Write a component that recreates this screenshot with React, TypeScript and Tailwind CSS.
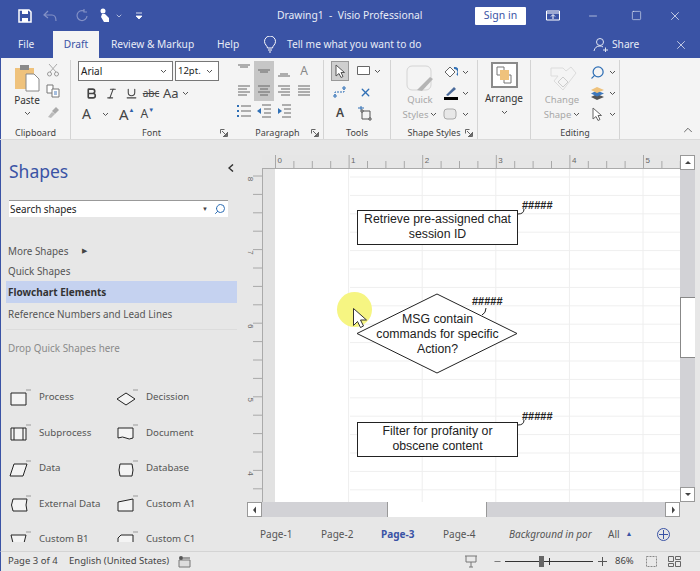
import type { ReactNode } from 'react';
import { Bold, ChevronDown, ChevronUp, Italic, Minus, Search, Square, Underline, X } from 'lucide-react';

const BLUE = '#3a53a5';

function Chev({ className = '' }: { className?: string }) {
  return (
    <svg width="7" height="5" viewBox="0 0 7 5" className={className}>
      <path d="M1 1l2.5 2.5L6 1" fill="none" stroke="#555" strokeWidth="1" />
    </svg>
  );
}

function Launcher() {
  return (
    <svg width="8" height="8" viewBox="0 0 8 8" className="shrink-0">
      <path d="M.5.5h4M.5.5v4M7.5 3v4.500h-4.500M2 2l4.500 4.500M6.500 4v2.500H4" fill="none" stroke="#666" strokeWidth="1" />
    </svg>
  );
}

function Group({
  width,
  label,
  launcher,
  divider = true,
  children,
}: {
  width: number;
  label?: string;
  launcher?: boolean;
  divider?: boolean;
  children: ReactNode;
}) {
  return (
    <div
      className={`flex shrink-0 flex-col ${divider ? 'border-r border-[#d4d4d4]' : ''}`}
      style={{ width }}
    >
      <div className="h-[66px] overflow-hidden">{children}</div>
      <div className="relative flex h-[13px] items-center justify-center text-[9px] leading-none text-[#444]">
        <span className="text-center">{label}</span>
        {launcher && <span className="absolute right-[4px] top-[3px]"><Launcher /></span>}
      </div>
    </div>
  );
}

function Lines({ d }: { d: string }) {
  return (
    <svg width="20" height="20" viewBox="0 0 20 20">
      <path d={d} stroke="#666" strokeWidth="1" fill="none" />
    </svg>
  );
}

function ParaCell({ children, on = false }: { children: ReactNode; on?: boolean }) {
  return (
    <div className={`flex h-[20px] w-[20px] items-center justify-center ${on ? 'bg-[#c6c6c6]' : ''}`}>
      {children}
    </div>
  );
}

function Ribbon() {
  return (
    <div className="flex h-[81px] shrink-0 border-l border-[#3a53a5] bg-[#f4f4f4] pt-[2px]">
      <Group width={70} label="Clipboard">
        <div className="flex">
          <div className="ml-[10px] flex w-[32px] flex-col items-center pt-[3px]">
            <svg width="26" height="29" viewBox="0 0 26 29">
              <path d="M1 5h19v21H1z" fill="#efc27c" />
              <path d="M6 2h9v5H6z" fill="#8a8a8a" />
              <path d="M12 11h8l5 5v12H12z" fill="#fff" stroke="#888" />
            </svg>
            <span className="mt-[1px] text-[10px] leading-[14px] text-[#333]">Paste</span>
            <Chev className="mt-[4px]" />
          </div>
          <div className="ml-[3px] flex flex-col items-center gap-[7px] pt-[3px]">
            <svg width="14" height="14" viewBox="0 0 14 14">
              <path d="M3 1l7 8M11 1L4 9" stroke="#aaa" fill="none" />
              <circle cx="3.500" cy="11" r="2" fill="none" stroke="#999" />
              <circle cx="10.500" cy="11" r="2" fill="none" stroke="#999" />
            </svg>
            <svg width="14" height="14" viewBox="0 0 14 14">
              <path d="M1 1h6v8H1z" fill="#fff" stroke="#777" />
              <path d="M6 5h7v8H6z" fill="#fff" stroke="#777" />
              <path d="M8 8h3M8 10h3" stroke="#4d7fc0" />
            </svg>
            <svg width="14" height="14" viewBox="0 0 14 14">
              <path d="M2 12l4-5 3 2-4 4z" fill="#bbb" />
              <path d="M6 6l4-4 3 3-4 4z" fill="#aaa" />
            </svg>
          </div>
        </div>
      </Group>

      <Group width={161} label="Font" launcher divider={false}>
        <div className="ml-[7px] flex gap-[2px] pt-[1px]">
          <div className="flex h-[20px] w-[95px] items-center justify-between border border-[#777] bg-white pl-[2px] pr-[5px] text-[10px] text-[#222]">
            Arial <Chev />
          </div>
          <div className="flex h-[20px] w-[44px] items-center justify-between border border-[#777] bg-white pl-[2px] pr-[5px] text-[9.500px] text-[#222]">
            12pt. <Chev />
          </div>
        </div>
        <div className="ml-[10px] mt-[2px] flex h-[20px] items-center text-[#444]">
          <span className="flex w-[20px] justify-center"><Bold size={13} strokeWidth={3} /></span>
          <span className="flex w-[20px] justify-center"><Italic size={13} strokeWidth={2} /></span>
          <span className="flex w-[20px] justify-center"><Underline size={13} strokeWidth={2} /></span>
          <span className="w-[20px] text-center text-[10px] leading-none line-through">abc</span>
          <span className="ml-[2px] text-[13px] leading-none">Aa</span>
          <Chev className="ml-[3px]" />
        </div>
        <div className="ml-[11px] mt-[1px] flex h-[20px] items-center text-[#444]">
          <span className="w-[14px] text-[14px] leading-none">A</span>
          <Chev className="ml-[6px]" />
          <span className="ml-[10px] text-[15px] leading-none">A</span>
          <span className="mb-[8px] text-[6px] leading-none text-[#2f5fa8]">▲</span>
          <span className="ml-[6px] text-[12px] leading-none">A</span>
          <span className="mb-[8px] text-[6px] leading-none text-[#2f5fa8]">▼</span>
        </div>
      </Group>

      <Group width={92} label="Paragraph" launcher>
        <div className="ml-[2px] flex w-[80px] flex-wrap pt-[1px]">
          <ParaCell><Lines d="M4 4h12M6 6h8" /></ParaCell>
          <ParaCell on><Lines d="M4 9h12M6 11h8" /></ParaCell>
          <ParaCell><Lines d="M4 15h12M6 13h8" /></ParaCell>
          <ParaCell><span className="text-[12px] leading-none text-[#888]">A</span></ParaCell>
          <ParaCell><Lines d="M4 5h12M4 8h9M4 11h12M4 14h9" /></ParaCell>
          <ParaCell on><Lines d="M4 5h12M6 8h8M4 11h12M6 14h8" /></ParaCell>
          <ParaCell><Lines d="M4 5h12M7 8h9M4 11h12M7 14h9" /></ParaCell>
          <ParaCell><Lines d="M4 5h12M4 8h12M4 11h12M4 14h12" /></ParaCell>
          <ParaCell>
            <svg width="16" height="14" viewBox="0 0 16 14">
              <path d="M5 2h10M5 7h10M5 12h10" stroke="#666" />
              <path d="M1 1h2v2H1zM1 6h2v2H1zM1 11h2v2H1z" fill="#2f6fb5" />
            </svg>
          </ParaCell>
          <ParaCell>
            <svg width="16" height="14" viewBox="0 0 16 14">
              <path d="M6 1h9M8 5h7M8 9h7M6 13h9" stroke="#666" />
              <path d="M1 7l4-3v6z" fill="#2f6fb5" />
            </svg>
          </ParaCell>
          <ParaCell>
            <svg width="16" height="14" viewBox="0 0 16 14">
              <path d="M6 1h9M8 5h7M8 9h7M6 13h9" stroke="#666" />
              <path d="M6 7L2 4v6z" fill="#2f6fb5" />
            </svg>
          </ParaCell>
        </div>
      </Group>

      <Group width={67} label="Tools">
        <div className="grid grid-cols-[20px_36px] items-center gap-y-[1px] pl-[7px] pt-[1px]">
          <div className="flex h-[20px] w-[18px] items-center justify-center border border-[#999] bg-[#cfcfcf]">
            <svg width="10" height="14" viewBox="0 0 10 14"><path d="M1 1v11l3-2.500 2 4 2-1-2-4h3.500z" fill="#fff" stroke="#555" /></svg>
          </div>
          <div className="flex items-center gap-[3px] pl-[6px]">
            <svg width="14" height="10" viewBox="0 0 14 10"><path d="M.5.5h12v8H.5z" fill="#fff" stroke="#666" /></svg>
            <Chev />
          </div>
          <div className="flex h-[20px] w-[18px] items-center justify-center">
            <svg width="14" height="12" viewBox="0 0 14 12"><path d="M2 10V6h9V2" fill="none" stroke="#2f6fb5" strokeDasharray="2 1" /><path d="M1 9h2v2H1zM10 1h2v2h-2z" fill="#fff" stroke="#2f6fb5" /></svg>
          </div>
          <div className="flex pl-[8px]"><X size={13} strokeWidth={2.500} color="#2f6fb5" /></div>
          <div className="flex h-[20px] w-[18px] items-center justify-center text-[12px] font-semibold text-[#444]">A</div>
          <div className="flex pl-[6px]">
            <svg width="16" height="15" viewBox="0 0 16 15"><path d="M5 5h8v8H5z" fill="none" stroke="#555" /><path d="M1 2h6M4 0v4" stroke="#2f6fb5" /><path d="M4 4h2v2H4zM12 12h2v2h-2z" fill="#fff" stroke="#555" /></svg>
          </div>
        </div>
      </Group>

      <Group width={87} label="Shape Styles" launcher>
        <div className="flex pl-[12px] pt-[5px]">
          <div className="flex w-[34px] flex-col items-center">
            <svg width="28" height="27" viewBox="0 0 28 27">
              <rect x="1" y="1" width="24" height="24" rx="5" fill="none" stroke="#d4d4d4" />
              <path d="M11 25l13-13 3 2-11 12z" fill="#b5b5b5" />
            </svg>
            <span className="text-[9.500px] leading-[15px] text-[#a8a8a8]">Quick</span>
            <span className="flex items-center gap-[2px] text-[9.500px] leading-[15px] text-[#a8a8a8]">Styles <Chev /></span>
          </div>
          <div className="ml-[6px] flex flex-col gap-[6px]">
            <div className="flex items-center gap-[4px]">
              <svg width="15" height="15" viewBox="0 0 15 15"><path d="M2 7l5-5 5 5-5 5z" fill="#fff" stroke="#666" /><path d="M11 3a4 4 0 013 7" fill="none" stroke="#2f6fb5" strokeWidth="2" /></svg>
              <Chev />
            </div>
            <div className="flex items-center gap-[4px]">
              <svg width="15" height="15" viewBox="0 0 15 15"><path d="M3 9l8-8 2 2-8 7z" fill="#4a6a9a" /><path d="M1 11h14v3H1z" fill="#000" /></svg>
              <Chev />
            </div>
            <div className="flex items-center gap-[4px]">
              <svg width="15" height="15" viewBox="0 0 15 15"><rect x="1" y="2" width="12" height="10" rx="3" fill="#e8e8e8" stroke="#aaa" /></svg>
              <Chev />
            </div>
          </div>
        </div>
      </Group>

      <Group width={53}>
        <div className="flex flex-col items-center pt-[2px]">
          <div className="flex h-[26px] w-[27px] items-center justify-center border-2 border-[#8a8a8a] bg-white">
            <svg width="16" height="18" viewBox="0 0 16 18">
              <path d="M1 1h7v8H1zM8 9h7v8H8z" fill="none" stroke="#777" />
              <path d="M4 4h9v10H4z" fill="#efc27c" />
            </svg>
          </div>
          <span className="mt-[3px] text-[10px] leading-[15px] text-[#333]">Arrange</span>
          <Chev className="mt-[4px]" />
        </div>
      </Group>

      <Group width={89} label="Editing">
        <div className="flex pl-[8px] pt-[5px]">
          <div className="flex w-[46px] flex-col items-center">
            <svg width="30" height="27" viewBox="0 0 30 27">
              <path d="M4 3h12l3 3 5-4 5 6-13 17-9-9 4-5H4z" fill="none" stroke="#dcdcdc" />
              <path d="M11 17l5-5 5 5-5 5z" fill="none" stroke="#ccc" />
            </svg>
            <span className="text-[9.500px] leading-[15px] text-[#a8a8a8]">Change</span>
            <span className="flex items-center gap-[2px] text-[9.500px] leading-[15px] text-[#a8a8a8]">Shape <Chev /></span>
          </div>
          <div className="ml-[5px] flex flex-col gap-[6px]">
            <div className="flex items-center gap-[4px]">
              <Search size={15} color="#2f6fb5" className="-scale-x-100" />
              <Chev />
            </div>
            <div className="flex items-center gap-[4px]">
              <svg width="15" height="15" viewBox="0 0 15 15"><path d="M1 11l6-3 7 3-7 3z" fill="#555" /><path d="M1 7.500l6-3 7 3-7 3z" fill="#3d78bd" /><path d="M1 4l6-3 7 3-7 3z" fill="#efc27c" /></svg>
              <Chev />
            </div>
            <div className="flex items-center gap-[4px]">
              <svg width="15" height="15" viewBox="0 0 15 15"><path d="M3 1v11l3-2.500 2 4 2-1-2-4h3.500z" fill="#fff" stroke="#666" /></svg>
              <Chev />
            </div>
          </div>
        </div>
      </Group>

      <div className="flex flex-1 items-end justify-end pb-[2px] pr-[5px]">
        <ChevronUp size={14} color="#555" strokeWidth={1.500} />
      </div>
    </div>
  );
}

const SHAPES: [string, string][] = [
  ['Process', 'M3 6h15v12H3z'],
  ['Decission', 'M2 12l9-6 9 6-9 6z'],
  ['Subprocess', 'M3 6h15v12H3zM6 6v12M15 6v12'],
  ['Document', 'M3 6h15v10q-4 2-7 0t-8 0z'],
  ['Data', 'M6 6h13l-4 12H2z'],
  ['Database', 'M5 6h12q2 6 0 12H5q-2-6 0-12z'],
  ['External Data', 'M5 6h14q-2 6 0 12H5q-3-6 0-12z'],
  ['Custom A1', 'M3 9l15-3v12H3z'],
  ['Custom B1', 'M3 6h15l-3 12H6z'],
  ['Custom C1', 'M6 6h12v12H3V9z'],
];

function ShapeItem({ name, d }: { name: string; d: string }) {
  return (
    <div className="flex h-[35.500px] w-[107px] items-center">
      <svg width="24" height="22" viewBox="0 0 24 22" className="ml-[7px] shrink-0">
        <path d={d} fill="#f4f4f4" stroke="#222" strokeWidth="1" />
        <path d="M18 3h5" stroke="#999" strokeWidth="1" fill="none" />
      </svg>
      <span className="ml-[7px] whitespace-nowrap text-[9.700px] text-[#555]">{name}</span>
    </div>
  );
}

function Sidebar() {
  return (
    <div className="flex h-full w-[247px] shrink-0 flex-col overflow-hidden border-l border-[#3a53a5] bg-[#e7e7e7]">
      <div className="flex items-center justify-between pl-[8px] pr-[13px] pt-[17px]">
        <span className="text-[17.500px] leading-[28px] text-[#3a53a5]">Shapes</span>
        <svg width="6" height="8" viewBox="0 0 6 8" className="mb-[6px]"><path d="M5 .5L1 4l4 3.500" fill="none" stroke="#333" strokeWidth="1.500" /></svg>
      </div>
      <div className="ml-[8px] mt-[15px] flex h-[17px] w-[219px] items-center justify-between border-t border-[#999] bg-white pl-[1px] pr-[2px] text-[9.900px] text-[#222]">
        Search shapes
        <span className="flex items-center gap-[6px]">
          <span className="text-[6px] text-[#444]">▼</span>
          <Search size={12} color="#2f6fb5" className="-scale-x-100" />
        </span>
      </div>
      <div className="mt-[24px] flex h-[20px] items-center pl-[7px] text-[9.900px] text-[#555]">
        More Shapes
        <span className="ml-[14px] text-[7px] text-[#444]">▶</span>
      </div>
      <div className="flex h-[20px] items-center pl-[7px] text-[9.900px] text-[#555]">Quick Shapes</div>
      <div className="ml-[5px] flex h-[22px] w-[231px] items-center bg-[#c5d2f0] pl-[2px] text-[10px] font-bold text-[#333]">
        Flowchart Elements
      </div>
      <div className="mt-[1px] flex h-[21px] items-center pl-[7px] text-[9.900px] text-[#555]">Reference Numbers and Lead Lines</div>
      <div className="ml-[5px] mt-[4px] h-px w-[231px] bg-[#dcdcdc]" />
      <div className="mt-[8px] flex h-[20px] items-center pl-[7px] text-[9.900px] text-[#8a8a8a]">Drop Quick Shapes here</div>
      <div className="mt-[22px] flex h-[162px] flex-wrap content-start overflow-hidden [&>*:nth-child(even)]:w-[125px]">
        {SHAPES.map(([name, d]) => (
          <ShapeItem key={name} name={name} d={d} />
        ))}
      </div>
    </div>
  );
}

const TICKS = Array.from({ length: 23 }, (_, i) => i);

function TopRuler() {
  return (
    <svg width="433" height="14" className="block shrink-0">
      <rect x="15" width="418" height="14" fill="#e6e6e6" />
      {TICKS.map((i) => {
        const x = 28.500 + i * 18.400;
        return i % 4 === 0 ? null : <path key={i} d={`M${x} 6v8`} stroke="#a8a8a8" />;
      })}
      {[0, 1, 2, 3, 4, 5].map((n) => {
        const x = 28.500 + n * 73.600;
        return (
          <g key={n}>
            <path d={`M${x} 0v14`} stroke="#a8a8a8" />
            <text x={x + 2} y="8" fontSize="8" fill="#666" fontFamily="'Liberation Sans', sans-serif">{n}</text>
          </g>
        );
      })}
      <path d="M15 13.500h418" stroke="#aaa" />
    </svg>
  );
}

function LeftRuler() {
  const ys = Array.from({ length: 19 }, (_, i) => 7 + i * 18.400);
  return (
    <svg width="28" height="333" className="block shrink-0">
      <rect x="15" width="13" height="333" fill="#e2e2e2" />
      <path d="M15.500 0v333" stroke="#aaa" />
      {ys.map((y) => (
        <path key={y} d={`M6 ${y}h9`} stroke="#a8a8a8" />
      ))}
      {[8, 7, 6, 5, 4].map((n, i) => (
        <text
          key={n}
          x="4"
          y={13 + i * 73.600}
          fontSize="8"
          fill="#666"
          fontFamily="'Liberation Sans', sans-serif"
          textAnchor="middle"
          transform={`rotate(90 4 ${10 + i * 73.600})`}
        >
          {n}
        </text>
      ))}
    </svg>
  );
}

function Callout({ className, d }: { className: string; d: string }) {
  return (
    <div className={`absolute ${className}`}>
      <svg width="40" height="24" viewBox="0 0 40 24" className="absolute left-0 top-0">
        <path d={d} fill="none" stroke="#222" />
      </svg>
    </div>
  );
}

function Canvas() {
  const hLines = Array.from({ length: 18 }, (_, i) => 8 + i * 18.400);
  return (
    <div className="relative h-[333px] w-[405px] overflow-hidden bg-white font-['Liberation_Sans',sans-serif] text-[12.300px] leading-[15px] text-[#222]">
      <svg width="405" height="333" className="absolute left-0 top-0">
        {hLines.map((y) => (
          <path key={y} d={`M75 ${y}h330`} stroke="#efefef" />
        ))}
        {[1, 2, 3, 4, 5].map((n) => (
          <path key={n} d={`M${n * 73.600} 0v333`} stroke="#eeeeee" />
        ))}
        <path d="M82 164.500L162 125l80 39.500-80 39.500z" fill="#fff" stroke="#222" />
      </svg>

      <div className="absolute left-[82px] top-[41px] flex h-[35px] w-[161px] items-center justify-center border border-[#222] bg-white pb-[2px] text-center">
        Retrieve pre-assigned chat<br />session ID
      </div>
      <div className="absolute left-[82px] top-[143px] w-[161px] text-center">
        MSG contain<br />commands for specific<br />Action?
      </div>
      <div className="absolute left-[82px] top-[253px] flex h-[35px] w-[161px] items-center justify-center border border-[#222] bg-white pb-[2px] text-center">
        Filter for profanity or<br />obscene content
      </div>

      <span className="absolute left-[247px] top-[31px] text-[11px] font-bold leading-none">#####</span>
      <Callout className="left-[243px] top-[39px]" d="M0 6q6 0 6-5" />
      <span className="absolute left-[197px] top-[127px] text-[11px] font-bold leading-none">#####</span>
      <Callout className="left-[200px] top-[136px]" d="M7 10q4-2 4-7" />
      <span className="absolute left-[247px] top-[242px] text-[11px] font-bold leading-none">#####</span>
      <Callout className="left-[243px] top-[250px]" d="M0 6q6 0 6-5" />

      <div className="absolute left-[62px] top-[123px] h-[35px] w-[35px] rounded-full bg-[#f6f582]" />
      <svg width="16" height="26" viewBox="0 0 16 26" className="absolute left-[78px] top-[139px]">
        <path d="M.5.500v17l4-4 3 6 3-1.500-3-6h6z" fill="#fff" stroke="#333" />
      </svg>
    </div>
  );
}

function ScrollBtn({ dir }: { dir: 'up' | 'down' | 'left' | 'right' }) {
  const d = {
    up: 'M1 5l3-3 3 3z',
    down: 'M1 2l3 3 3-3z',
    left: 'M5 0.500L2 4l3 3.500z',
    right: 'M3 0.500L6 4 3 7.500z',
  }[dir];
  return (
    <div className="flex h-[15px] w-[15px] shrink-0 items-center justify-center border border-[#999] bg-white">
      <svg width="8" height="8" viewBox="0 0 8 8"><path d={d} fill="#444" /></svg>
    </div>
  );
}

function Workspace() {
  return (
    <div className="flex min-w-0 flex-1 flex-col bg-[#e7e7e7]">
      <div className="h-[15px] shrink-0" />
      <div className="flex h-[347px] shrink-0">
        <div className="flex w-[433px] flex-col">
          <TopRuler />
          <div className="flex">
            <LeftRuler />
            <Canvas />
          </div>
        </div>
        <div className="flex w-[15px] flex-col bg-[#d2d2d6]">
          <ScrollBtn dir="up" />
          <div className="h-[127px]" />
          <div className="h-[61px] border border-[#888] border-r-0 bg-white" />
          <div className="flex-1" />
          <ScrollBtn dir="down" />
        </div>
      </div>
      <div className="flex h-[15px] w-[433px] shrink-0 bg-[#d2d2d6]">
        <ScrollBtn dir="left" />
        <div className="w-[125px]" />
        <div className="w-[100px] border-x border-[#999] bg-white" />
        <div className="flex-1" />
        <ScrollBtn dir="right" />
      </div>
      <div className="flex h-[34px] items-center text-[10px] text-[#555]">
        <span className="ml-[13px] w-[61px]">Page-1</span>
        <span className="w-[60px]">Page-2</span>
        <span className="w-[62px] font-bold text-[#3a53a5]">Page-3</span>
        <span className="w-[66px]">Page-4</span>
        <span className="w-[85px] overflow-hidden whitespace-nowrap italic">Background in por</span>
        <span className="ml-[14px]">All</span>
        <span className="ml-[6px] text-[7px] text-[#3a53a5]">▲</span>
        <svg width="15" height="15" viewBox="0 0 15 15" className="ml-[23px]">
          <circle cx="7.500" cy="7.500" r="6" fill="none" stroke="#3a53a5" />
          <path d="M3 7.500h9M7.500 3v9" stroke="#3a53a5" />
        </svg>
      </div>
    </div>
  );
}

function StatusBar() {
  return (
    <div className="flex h-[20px] shrink-0 items-center border-l border-t border-[#d4d4d4] border-l-[#3a53a5] bg-[#e9e9e9] text-[9.500px] text-[#444]">
      <span className="ml-[7px] w-[61px] whitespace-nowrap">Page 3 of 4</span>
      <span className="w-[109px] whitespace-nowrap">English (United States)</span>
      <svg width="13" height="13" viewBox="0 0 13 13">
        <path d="M1 5h11v7H1z" fill="#ddd" stroke="#777" />
        <circle cx="3" cy="3" r="2" fill="#555" />
        <path d="M5 3h7" stroke="#555" />
      </svg>
      <svg width="12" height="13" viewBox="0 0 12 13" className="ml-[274px]">
        <path d="M0 1h12M1 1v6h10V1M6 7v5M4 12h4" fill="none" stroke="#777" />
      </svg>
      <Minus size={9} color="#555" className="ml-[16px]" />
      <div className="relative ml-[3px] h-px w-[88px] bg-[#333]">
        <div className="absolute left-[34px] top-[-5px] h-[11px] w-[5px] bg-[#666]" />
        <div className="absolute left-[44px] top-[-3px] h-[7px] w-px bg-[#333]" />
      </div>
      <svg width="9" height="9" viewBox="0 0 9 9" className="ml-[5px]"><path d="M0 4.500h9M4.500 0v9" stroke="#555" /></svg>
      <span className="ml-[8px] w-[31px]">86%</span>
      <svg width="11" height="11" viewBox="0 0 11 11"><path d="M.5.5h10v10H.500z" fill="none" stroke="#888" strokeDasharray="2 1" /></svg>
      <svg width="13" height="11" viewBox="0 0 13 11" className="ml-[11px]"><path d="M.5.5h5v5h-5zM7.500.5h5v3h-5zM.5 7.500h5v3h-5zM7.500 5.500h5v5h-5z" fill="none" stroke="#666" /></svg>
    </div>
  );
}

export default function App() {
  return (
    <div className="flex h-[571px] w-[700px] flex-col overflow-hidden font-['Noto_Sans',sans-serif]" style={{ backgroundColor: BLUE }}>
      <div className="flex h-[31px] shrink-0 items-center bg-[#3a53a5] text-[#e8ecf6]">
        <svg width="14" height="14" viewBox="0 0 14 14" className="ml-[18px]">
          <path d="M1 1h10l2 2v10H1z" fill="none" stroke="#fff" strokeWidth="1.500" />
          <path d="M4 1h6v4H4zM4 9h6v4H4z" fill="#fff" />
        </svg>
        <svg width="14" height="12" viewBox="0 0 14 12" className="ml-[11px]"><path d="M5 1L1 5l4 3M1 5h8q4 0 4 6" fill="none" stroke="#8391c6" strokeWidth="1.200" /></svg>
        <svg width="14" height="14" viewBox="0 0 14 14" className="ml-[18px]"><path d="M12 7a5 5 0 11-3-5M9 0v3h3" fill="none" stroke="#8391c6" strokeWidth="1.200" /></svg>
        <svg width="13" height="15" viewBox="0 0 13 15" className="ml-[9px]"><circle cx="5" cy="3" r="2.500" fill="#fff" /><path d="M4 6h3l4 4v4H6L3 9z" fill="#fff" /></svg>
        <ChevronDown size={8} strokeWidth={2} className="ml-[4px]" />
        <svg width="8" height="8" viewBox="0 0 8 8" className="ml-[12px]"><path d="M1 1h6M1 4h6l-3 3z" stroke="#fff" fill="#fff" strokeWidth=".8" /></svg>
        <span className="ml-[134px] mt-[1px] w-[190px] whitespace-nowrap text-[10.300px]">Drawing1&nbsp; -&nbsp; Visio Professional</span>
        <div className="ml-[8px] flex h-[18px] w-[51px] items-center justify-center rounded-[1px] bg-white text-[10.500px] text-[#3a53a5]">Sign in</div>
        <svg width="14" height="11" viewBox="0 0 14 11" className="ml-[20px]"><path d="M.5 1h13v9H.5zM.5 3h13M7 9V5M5 6.500L7 4.500l2 2" fill="none" stroke="#fff" /></svg>
        <Minus size={12} strokeWidth={1.300} className="ml-[27px]" />
        <Square size={11} strokeWidth={1.300} className="ml-[32px]" />
        <X size={14} strokeWidth={1.300} className="ml-[26px]" />
      </div>

      <div className="flex h-[27px] shrink-0 items-center bg-[#3a53a5] text-[10.200px] text-[#e8ecf6]">
        <span className="ml-[18px] w-[35px]">File</span>
        <span className="flex h-[27px] w-[46px] items-center justify-center bg-[#f4f4f4] text-[#3a53a5]">Draft</span>
        <span className="ml-[12px] w-[106px] whitespace-nowrap">Review &amp; Markup</span>
        <span className="w-[43px]">Help</span>
        <svg width="14" height="17" viewBox="0 0 14 17" className="ml-[3px]"><path d="M4.500 12c0-2-3-3.500-3-6.500a5.500 5.500 0 0111 0c0 3-3 4.500-3 6.500zM5 14h4M6 16h2" fill="none" stroke="#fff" /></svg>
        <span className="ml-[10px] w-[134px] whitespace-nowrap">Tell me what you want to do</span>
        <svg width="15" height="15" viewBox="0 0 15 15" className="ml-[172px]"><circle cx="7" cy="5" r="3.500" fill="none" stroke="#dfe4f2" /><path d="M1 14q1-5 6-5 2 0 3 1M10 13h5M12.500 10.500v5" fill="none" stroke="#dfe4f2" /></svg>
        <span className="ml-[4px] w-[26px]">Share</span>
        <X size={14} strokeWidth={1.300} className="ml-[36px]" />
      </div>

      <Ribbon />

      <div className="flex h-[412px] shrink-0 border-t border-[#dadada]">
        <Sidebar />
        <Workspace />
      </div>

      <StatusBar />
    </div>
  );
}
